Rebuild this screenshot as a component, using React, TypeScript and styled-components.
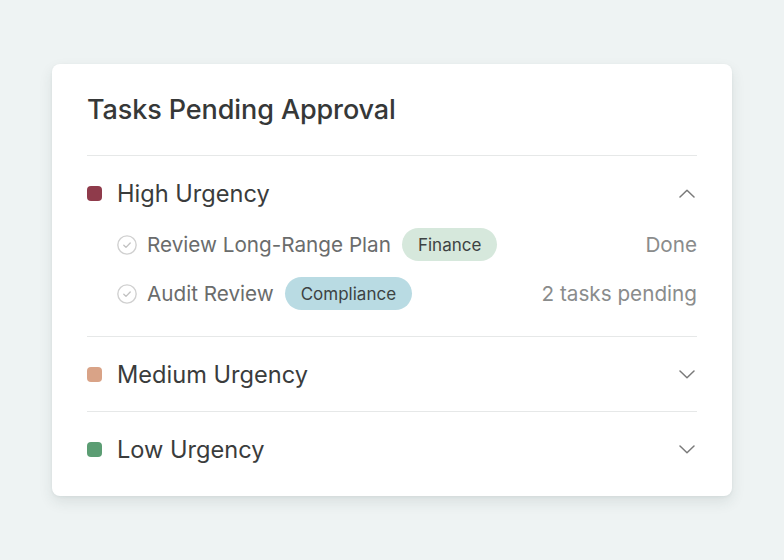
import { useState } from "react";
import styled, { createGlobalStyle } from "styled-components";

const GlobalStyle = createGlobalStyle`
  html, body {
    margin: 0;
    padding: 0;
    background: #eef3f3;
  }
  body {
    font-family: Inter, "Noto Sans", "Liberation Sans", sans-serif;
    -webkit-font-smoothing: antialiased;
  }
`;

type Task = { title: string; tag: string; tone: "green" | "blue"; status: string };
type Group = { name: string; color: string; tasks: Task[] };

const groups: Group[] = [
  {
    name: "High Urgency",
    color: "#8f3b4b",
    tasks: [
      { title: "Review Long-Range Plan", tag: "Finance", tone: "green", status: "Done" },
      { title: "Audit Review", tag: "Compliance", tone: "blue", status: "2 tasks pending" },
    ],
  },
  { name: "Medium Urgency", color: "#d9a387", tasks: [] },
  { name: "Low Urgency", color: "#5b9d73", tasks: [] },
];

const Chevron = ({ up }: { up: boolean }) => (
  <svg width="16" height="9" viewBox="0 0 16 9" fill="none">
    <path
      d={up ? "M1 8L8 1.2L15 8" : "M1 1L8 7.8L15 1"}
      stroke="#7a7a7a"
      strokeWidth="1.5"
      strokeLinecap="round"
      strokeLinejoin="round"
    />
  </svg>
);

const CheckCircle = () => (
  <svg width="22" height="22" viewBox="0 0 24 24" fill="none">
    <circle cx="12" cy="12" r="10" stroke="#d0d0d0" strokeWidth="1.5" />
    <path d="M8.5 12.2l2.4 2.4 4.6-4.8" stroke="#c2c2c2" strokeWidth="1.5" strokeLinecap="round" strokeLinejoin="round" />
  </svg>
);

const App = () => {
  const [open, setOpen] = useState<string | null>("High Urgency");
  return (
    <>
      <GlobalStyle />
      <Page>
        <Card>
          <Title>Tasks Pending Approval</Title>
          {groups.map((g) => {
            const isOpen = open === g.name;
            return (
              <Section key={g.name}>
                <SectionHeader onClick={() => setOpen(isOpen ? null : g.name)}>
                  <Dot $color={g.color} />
                  <SectionName>{g.name}</SectionName>
                  <Chevron up={isOpen} />
                </SectionHeader>
                {isOpen && g.tasks.length > 0 && (
                  <TaskList>
                    {g.tasks.map((t) => (
                      <TaskRow key={t.title}>
                        <CheckCircle />
                        <TaskTitle>{t.title}</TaskTitle>
                        <Tag $tone={t.tone}>{t.tag}</Tag>
                        <Status>{t.status}</Status>
                      </TaskRow>
                    ))}
                  </TaskList>
                )}
              </Section>
            );
          })}
        </Card>
      </Page>
    </>
  );
};

export default App;

const Page = styled.div`
  width: 784px;
  height: 560px;
  box-sizing: border-box;
  padding: 64px 52px 0;
`;

const Card = styled.div`
  background: #ffffff;
  border-radius: 8px;
  box-shadow: 0 6px 14px rgba(40, 60, 60, 0.1), 0 1px 3px rgba(40, 60, 60, 0.06);
  padding: 28px 35px 26px;
`;

const Title = styled.h2`
  margin: 0;
  font-size: 27px;
  line-height: 36px;
  font-weight: 500;
  color: #363838;
  letter-spacing: -0.1px;
  padding-bottom: 27px;
`;

const Section = styled.div`
  border-top: 1px solid #e6e8e8;
  padding: 16px 0;

  &:last-child {
    padding-bottom: 0;
  }
`;

const SectionHeader = styled.div`
  display: flex;
  align-items: center;
  height: 42px;
  cursor: pointer;

  svg {
    margin-right: 2px;
  }
`;

const Dot = styled.span<{ $color: string }>`
  width: 15px;
  height: 15px;
  border-radius: 4px;
  background: ${(p) => p.$color};
  flex-shrink: 0;
`;

const SectionName = styled.span`
  flex: 1;
  margin-left: 15px;
  font-size: 23.6px;
  color: #3a3c3c;
`;

const TaskList = styled.div`
  margin: 6px 0 2px 29px;
`;

const TaskRow = styled.div`
  display: flex;
  align-items: center;
  height: 49px;
`;

const TaskTitle = styled.span`
  margin-left: 9px;
  font-size: 20.7px;
  color: #6a6c6c;
`;

const Tag = styled.span<{ $tone: "green" | "blue" }>`
  margin-left: 11px;
  height: 33px;
  display: inline-flex;
  align-items: center;
  padding: 0 16px;
  border-radius: 17px;
  font-size: 17px;
  color: #3d4242;
  background: ${(p) => (p.$tone === "green" ? "#d6e8dc" : "#b9dbe3")};
`;

const Status = styled.span`
  margin-left: auto;
  font-size: 20.7px;
  color: #8a8c8c;
`;
